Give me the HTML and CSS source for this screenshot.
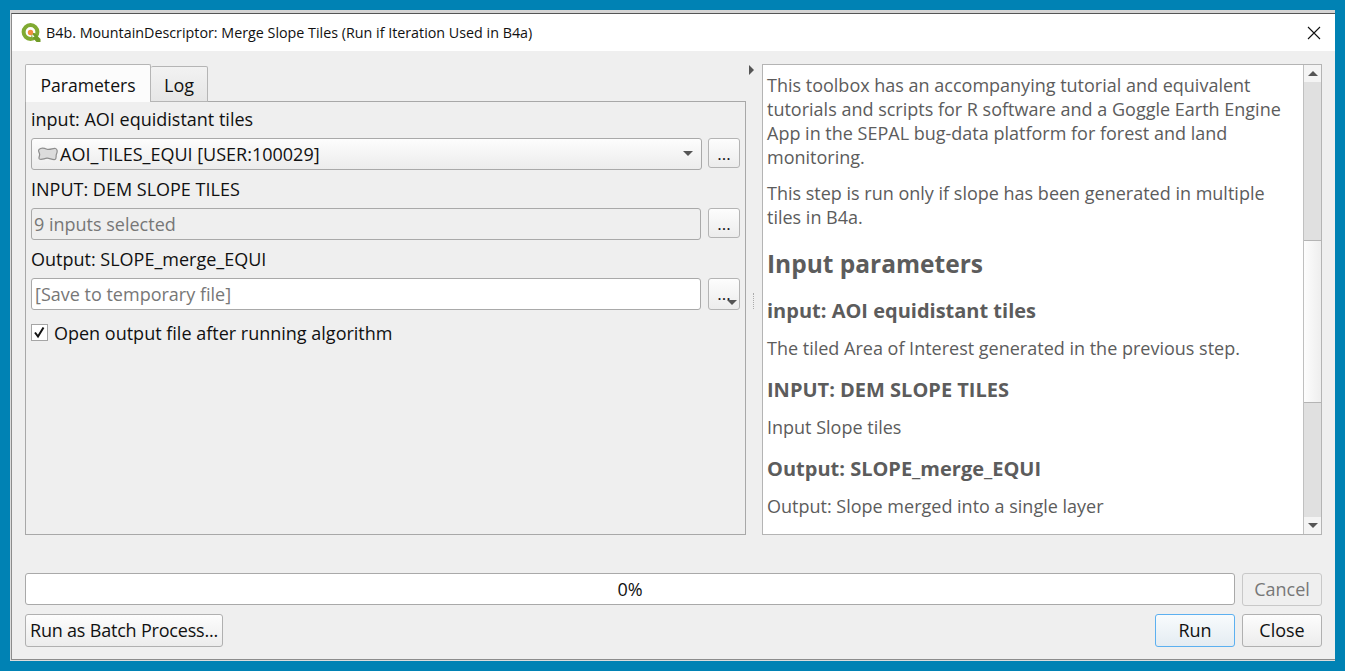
FILE: index.html
```html
<!DOCTYPE html>
<html>
<head>
  <title>B4b. MountainDescriptor: Merge Slope Tiles</title>
  <link rel="stylesheet" href="styles.css">
</head>
<body>
  <div class="dialog">
    <div class="titlebar">
      <svg class="qgis-logo" width="20" height="20" viewBox="0 0 20 20">
        <circle cx="9.5" cy="9" r="6.9" fill="none" stroke="#80aa32" stroke-width="4"/>
        <path d="M10.5 10 L13.5 10 L19.5 16 L19.5 19 L15.5 19 L10.5 13.5 Z" fill="#719c28"/>
        <path d="M11 11 L13.5 13.5 L11.5 14.5 Z" fill="#fff"/>
        <circle cx="9.5" cy="9.5" r="2.7" fill="#ef8f3f"/>
      </svg>
      <span class="title-text">B4b. MountainDescriptor: Merge Slope Tiles (Run if Iteration Used in B4a)</span>
      <svg class="close-x" width="14" height="14" viewBox="0 0 14 14">
        <path d="M1 1 L13 13 M13 1 L1 13" stroke="#111" stroke-width="1.1" fill="none"/>
      </svg>
    </div>

    <div class="content">
      <div class="main-row">
        <div class="left-col">
          <div class="tabs">
            <div class="tab tab-active">Parameters</div>
            <div class="tab tab-log">Log</div>
          </div>
          <div class="panel">
            <div class="label label-first">input: AOI equidistant tiles</div>
            <div class="field-row">
              <div class="combo">
                <svg class="poly-icon" width="21" height="14" viewBox="0 0 21 14">
                  <path d="M2 2.5 C4 0.5 7 1 10 2.2 C13 3.2 16 1 18.5 1.5 C20.5 2 20.5 5 19.5 7 C18.5 9 20 11.5 18 12.5 C15.5 13.2 12.5 11 10 11.2 C7 11.5 4.5 13 2.5 12 C1 11 3 9 2.6 7 C2.2 5 0.8 4 2 2.5 Z" fill="#dcdcdc" stroke="#8e8e8e" stroke-width="1.2"/>
                </svg>
                <span>AOI_TILES_EQUI [USER:100029]</span>
                <span class="arrow-down combo-arrow"></span>
              </div>
              <div class="dots-btn btn-short">...</div>
            </div>

            <div class="label">INPUT: DEM SLOPE TILES</div>
            <div class="field-row">
              <div class="text-field field-disabled">9 inputs selected</div>
              <div class="dots-btn btn-short">...</div>
            </div>

            <div class="label">Output: SLOPE_merge_EQUI</div>
            <div class="field-row">
              <div class="text-field field-placeholder">[Save to temporary file]</div>
              <div class="dots-btn">...<span class="arrow-down dots-arrow"></span></div>
            </div>

            <div class="check-row">
              <svg class="checkbox" width="17" height="17" viewBox="0 0 17 17">
                <rect x="0.5" y="0.5" width="16" height="16" fill="#fff" stroke="#a5a5a5"/>
                <path d="M4 8.5 L7 12.5 L12.5 3.5" fill="none" stroke="#111" stroke-width="2"/>
              </svg>
              <span>Open output file after running algorithm</span>
            </div>
          </div>
        </div>

        <div class="splitter">
          <span class="arrow-right"></span>
          <span class="grip"></span>
        </div>

        <div class="help">
          <div class="help-text">
            <p class="para-first">This toolbox has an accompanying tutorial and equivalent tutorials and scripts for R software and a Goggle Earth Engine App in the SEPAL bug-data platform for forest and land monitoring.</p>
            <p>This step is run only if slope has been generated in multiple tiles in B4a.</p>
            <h2>Input parameters</h2>
            <h3>input: AOI equidistant tiles</h3>
            <p>The tiled Area of Interest generated in the previous step.</p>
            <h3>INPUT: DEM SLOPE TILES</h3>
            <p>Input Slope tiles</p>
            <h3>Output: SLOPE_merge_EQUI</h3>
            <p>Output: Slope merged into a single layer</p>
          </div>
          <div class="scrollbar">
            <div class="scroll-btn"><span class="arrow-up"></span></div>
            <div class="scroll-track"></div>
            <div class="scroll-thumb"></div>
            <div class="scroll-track track-low"></div>
            <div class="scroll-btn"><span class="arrow-down"></span></div>
          </div>
        </div>
      </div>

      <div class="progress-row">
        <div class="progress">0%</div>
        <div class="btn btn-disabled">Cancel</div>
      </div>
      <div class="button-row">
        <div class="btn btn-batch">Run as Batch Process...</div>
        <div class="spacer"></div>
        <div class="btn btn-run">Run</div>
        <div class="btn">Close</div>
      </div>
    </div>
  </div>
</body>
</html>
```

FILE: styles.css
```css
* {
  box-sizing: border-box;
}

html, body {
  margin: 0;
  height: 671px;
  overflow: hidden;
}

body {
  background-color: #0082b4;
  padding: 10px 10px 0 10px;
  font-family: "Open Sans", "Noto Sans", sans-serif;
  font-size: 18px;
  color: #111;
}

.dialog {
  width: 1325px;
  height: 651px;
  background-color: #efefef;
  border-top: 3px solid #d4d4d4;
  border-left: 1px solid #dcdcdc;
  border-bottom: 1px solid #dcdcdc;
}

.titlebar {
  height: 38px;
  background-color: #fff;
  border-top: 1px solid #555;
  border-left: 1px solid #8c8c8c;
  display: flex;
  align-items: center;
  padding-left: 9px;
  padding-right: 14px;
}

.qgis-logo {
  margin-right: 5px;
}

.title-text {
  font-size: 14.3px;
  flex: 1;
}

.content {
  height: 609px;
  border-left: 1px solid #8c8c8c;
  border-bottom: 1px solid #8c8c8c;
  padding: 13px 13px 0 13px;
}

.main-row {
  display: flex;
  height: 471px;
}

.left-col {
  width: 721px;
  display: flex;
  flex-direction: column;
}

.tabs {
  display: flex;
  align-items: flex-end;
  height: 38px;
  position: relative;
  z-index: 1;
  margin-bottom: -1px;
}

.tab {
  height: 36px;
  line-height: 37px;
  text-align: center;
  background: linear-gradient(#f2f2f2, #e6e6e6);
  border: 1px solid #b5b5b5;
  border-radius: 2px 2px 0 0;
}

.tab-log {
  width: 57px;
  border-left: 0;
}

.tab-active {
  height: 38px;
  width: 126px;
  line-height: 40px;
  font-size: 17.6px;
  background: #fcfcfc;
  border-bottom: 0;
}

.panel {
  flex: 1;
  border: 1px solid #a8a8a8;
  padding: 0 5px;
}

.label {
  height: 38px;
  line-height: 39px;
}

.label-first {
  height: 36px;
  line-height: 34px;
}

.field-row {
  display: flex;
  justify-content: space-between;
  align-items: flex-start;
}

.combo {
  width: 671px;
  height: 32px;
  display: flex;
  align-items: center;
  padding-left: 5px;
  background: linear-gradient(#fdfdfd, #ececec);
  border: 1px solid #a9a9a9;
  border-radius: 3px;
  position: relative;
}

.poly-icon {
  margin-right: 2px;
}

.combo-arrow {
  position: absolute;
  right: 8px;
  top: 12px;
}

.text-field {
  width: 670px;
  height: 32px;
  line-height: 31px;
  padding-left: 3px;
  border: 1px solid #a9a9a9;
  border-radius: 3px;
}

.field-disabled {
  background-color: #efefef;
  color: #777;
  padding-left: 2px;
}

.field-placeholder {
  background-color: #fff;
  color: #777;
}

.dots-btn {
  width: 32px;
  height: 32px;
  text-align: center;
  line-height: 29px;
  font-size: 17px;
  background: linear-gradient(#fdfdfd, #ececec);
  border: 1px solid #b4b4b4;
  border-radius: 3px;
  position: relative;
}

.btn-short {
  height: 30px;
}

.dots-arrow {
  position: absolute;
  right: 2px;
  top: 21px;
}

.arrow-down {
  display: inline-block;
  width: 0;
  height: 0;
  border-left: 5px solid transparent;
  border-right: 5px solid transparent;
  border-top: 5px solid #555;
}

.arrow-up {
  display: inline-block;
  width: 0;
  height: 0;
  border-left: 5px solid transparent;
  border-right: 5px solid transparent;
  border-bottom: 5px solid #555;
}

.arrow-right {
  display: block;
  width: 0;
  height: 0;
  border-top: 5px solid transparent;
  border-bottom: 5px solid transparent;
  border-left: 5px solid #555;
  position: absolute;
  left: 3px;
  top: 1px;
}

.check-row {
  display: flex;
  align-items: center;
  height: 17px;
  margin-top: 14px;
}

.checkbox {
  margin-right: 6px;
}

.splitter {
  width: 16px;
  position: relative;
}

.grip {
  position: absolute;
  left: 7px;
  top: 229px;
  height: 16px;
  border-left: 1px dotted #aaa;
}

.help {
  width: 560px;
  display: flex;
  background-color: #fff;
  border: 1px solid #b4b4b4;
}

.help-text {
  flex: 1;
  padding: 0 4px;
  color: #5c5c5c;
  line-height: 24px;
  overflow: hidden;
}

.help-text p {
  margin: 12px 0 0 0;
}

.help-text .para-first {
  margin-top: 8px;
}

.help-text h2 {
  font-size: 24.5px;
  line-height: 36px;
  margin: 17px 0 -1px 0;
}

.help-text h3 {
  font-size: 20px;
  line-height: 28px;
  margin: 16px 0 -1px 0;
}

.scrollbar {
  width: 18px;
  display: flex;
  flex-direction: column;
  border-left: 1px solid #c0c0c0;
}

.scroll-btn {
  height: 17px;
  display: flex;
  align-items: center;
  justify-content: center;
  background-color: #f4f4f4;
}

.scroll-track {
  height: 158px;
  background-color: #e0e0e0;
}

.track-low {
  height: 114px;
}

.scroll-thumb {
  height: 163px;
  background: linear-gradient(90deg, #fdfdfd, #eeeeee);
  border-top: 1px solid #b4b4b4;
  border-bottom: 1px solid #b4b4b4;
}

.progress-row {
  display: flex;
  justify-content: space-between;
  margin-top: 38px;
}

.progress {
  width: 1210px;
  height: 32px;
  line-height: 30px;
  text-align: center;
  background-color: #fff;
  border: 1px solid #a9a9a9;
  border-radius: 3px;
}

.button-row {
  display: flex;
  gap: 7px;
  margin-top: 8px;
}

.spacer {
  flex: 1;
}

.btn {
  width: 80px;
  height: 33px;
  line-height: 31px;
  text-align: center;
  background: linear-gradient(#fdfdfd, #ececec);
  border: 1px solid #b0b0b0;
  border-radius: 3px;
}

.btn-disabled {
  color: #777;
  background: #efefef;
  border-color: #c8c8c8;
}

.btn-batch {
  width: 198px;
  letter-spacing: -0.2px;
}

.btn-run {
  border-color: #5cb0f0;
  background: linear-gradient(#f8fbfd, #e4ecf2);
}
```
